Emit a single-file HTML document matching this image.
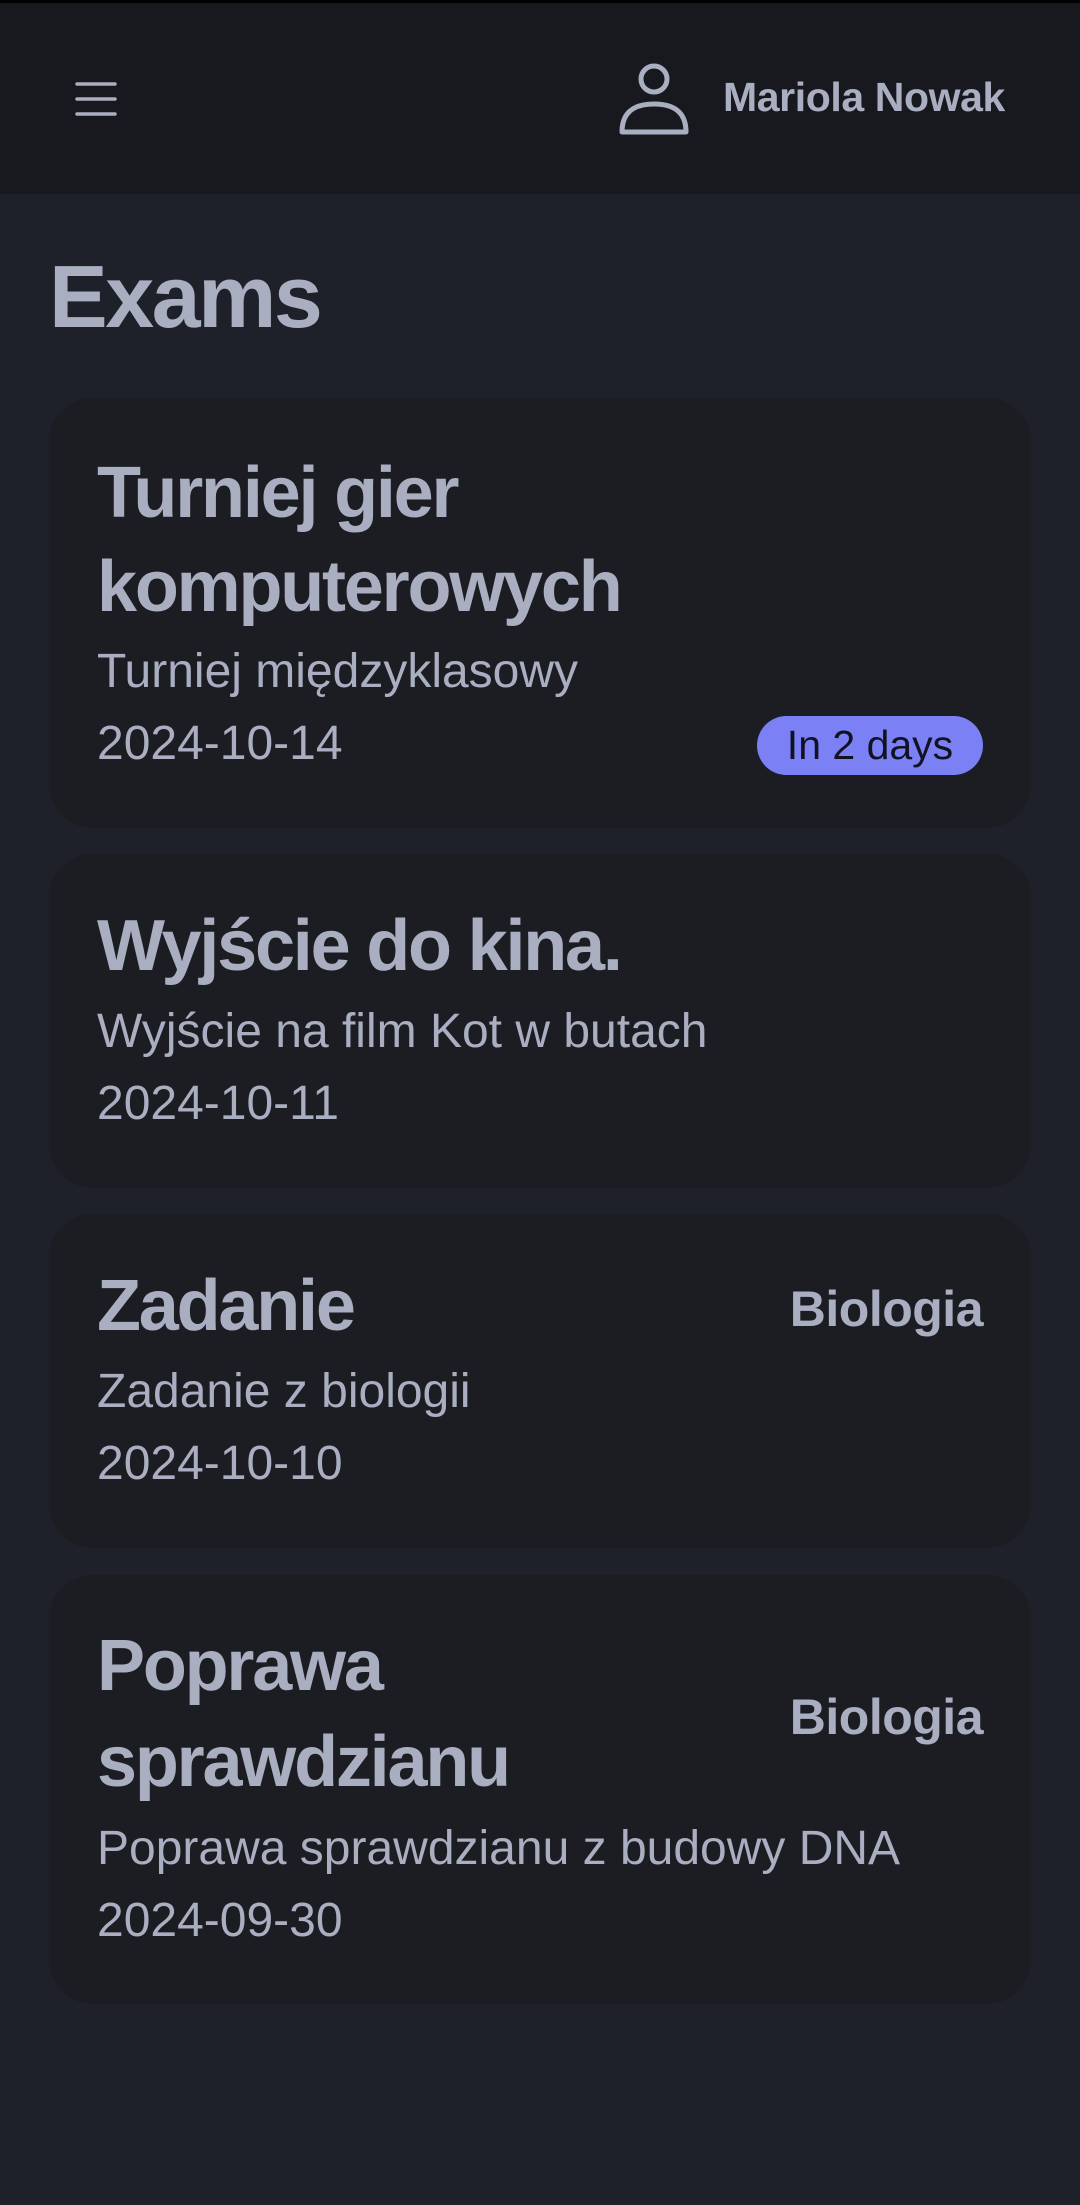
<!DOCTYPE html>
<html><head><meta charset="utf-8"><style>
*{margin:0;padding:0;box-sizing:border-box}
body{width:1080px;height:2205px;background:#1e2129;font-family:"Liberation Sans",sans-serif;color:#a9aec0;position:relative;overflow:hidden}
.hdr{position:absolute;left:0;top:0;width:1080px;height:194px;background:#17191e;border-top:3px solid #000}
.a{position:absolute;line-height:1;white-space:nowrap}
.card{position:absolute;left:49px;width:982px;background:#1b1d22;border-radius:44px}
.t{font-size:72px;font-weight:bold;letter-spacing:-2.2px}
.s{font-size:48px;letter-spacing:0}
.b{font-size:50px;font-weight:bold;right:97px;letter-spacing:-0.5px}
</style></head><body>
<div class="hdr"></div>
<svg style="position:absolute;left:74px;top:80px" width="44" height="38" viewBox="0 0 44 38"><g stroke="#a9aec0" stroke-width="3.5" stroke-linecap="round"><line x1="3" y1="4" x2="41" y2="4"/><line x1="3" y1="19" x2="41" y2="19"/><line x1="3" y1="34" x2="41" y2="34"/></g></svg>
<svg style="position:absolute;left:618px;top:62px" width="72" height="74" viewBox="0 0 72 74"><g fill="none" stroke="#a9aec0" stroke-width="5"><circle cx="36" cy="17" r="13"/><path d="M4 70 L68 70 Q68 42 36 42 Q4 42 4 70 Z" stroke-linejoin="round"/></g></svg>
<div class="a" style="left:723px;top:77px;font-size:41px;font-weight:bold;letter-spacing:-0.4px">Mariola Nowak</div>
<div class="a" style="left:49px;top:253px;font-size:88px;font-weight:bold;letter-spacing:-2.5px">Exams</div>

<div class="card" style="top:398px;height:430px"></div>
<div class="a t" style="left:97px;top:457px">Turniej gier</div>
<div class="a t" style="left:97px;top:551px">komputerowych</div>
<div class="a s" style="left:97px;top:648px">Turniej międzyklasowy</div>
<div class="a s" style="left:97px;top:720px">2024-10-14</div>
<div class="a" style="left:757px;top:716px;width:226px;height:59px;border-radius:30px;background:#7b80f5;color:#111322;font-size:41px;text-align:center;line-height:59px">In 2 days</div>

<div class="card" style="top:854px;height:334px"></div>
<div class="a t" style="left:97px;top:910px">Wyjście do kina.</div>
<div class="a s" style="left:97px;top:1008px">Wyjście na film Kot w butach</div>
<div class="a s" style="left:97px;top:1080px">2024-10-11</div>

<div class="card" style="top:1214px;height:334px"></div>
<div class="a t" style="left:97px;top:1270px">Zadanie</div>
<div class="a b" style="top:1284px">Biologia</div>
<div class="a s" style="left:97px;top:1368px">Zadanie z biologii</div>
<div class="a s" style="left:97px;top:1440px">2024-10-10</div>

<div class="card" style="top:1575px;height:429px"></div>
<div class="a t" style="left:97px;top:1630px">Poprawa</div>
<div class="a t" style="left:97px;top:1726px">sprawdzianu</div>
<div class="a b" style="top:1692px">Biologia</div>
<div class="a s" style="left:97px;top:1825px">Poprawa sprawdzianu z budowy DNA</div>
<div class="a s" style="left:97px;top:1897px">2024-09-30</div>
</body></html>
